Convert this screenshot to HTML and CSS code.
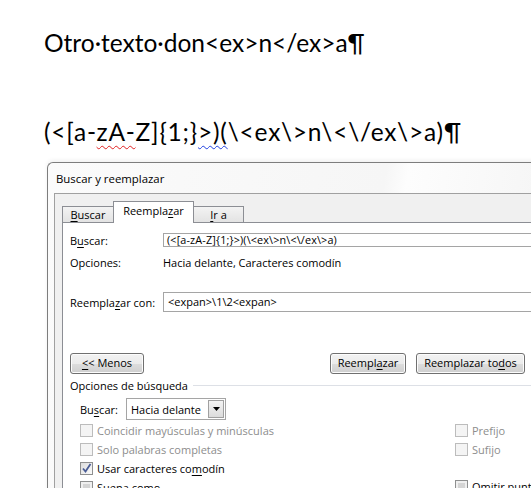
FILE: index.html
```html
<!DOCTYPE html>
<html lang="es">
<head>
<meta charset="utf-8">
<link rel="stylesheet" href="styles.css">
</head>
<body>
<div class="doc">
  <p class="line l1">Otro·texto·don&lt;ex&gt;n&lt;/ex&gt;a¶</p>
  <p class="line l2">(&lt;[a-<span class="sp">zA-</span>Z]{1;}<span class="gr">&gt;)(</span>\&lt;ex\&gt;n\&lt;\/ex\&gt;a)¶</p>
</div>
<div class="dialog">
  <div class="title">Buscar y reemplazar</div>
  <div class="client">
    <div class="tabs">
      <div class="tab t1"><u>B</u>uscar</div>
      <div class="tab sel">Reempla<u>z</u>ar</div>
      <div class="tab t3"><u>I</u>r a</div>
    </div>
    <div class="panel">
      <div class="row r-find">
        <span class="lbl">B<u>u</u>scar:</span>
        <div class="field small">(&lt;[a-zA-Z]{1;}&gt;)(\&lt;ex\&gt;n\&lt;\/ex\&gt;a)</div>
      </div>
      <div class="row r-opt">
        <span class="lbl">Opciones:</span>
        <span>Hacia delante, Caracteres comodín</span>
      </div>
      <div class="row r-rep">
        <span class="lbl">Reempla<u>z</u>ar con:</span>
        <div class="field big">&lt;expan&gt;\1\2&lt;expan&gt;</div>
      </div>
      <div class="btnrow">
        <div class="btn b-less"><u>&lt;</u>&lt; Menos</div>
        <div class="spacer"></div>
        <div class="btn b-rep">Reempl<u>a</u>zar</div>
        <div class="btn b-all">Reemplazar to<u>d</u>os</div>
      </div>
      <div class="group"><span>Opciones de búsqueda</span><i></i></div>
      <div class="dirrow">
        <span class="lbl2">Bu<u>s</u>car:</span>
        <div class="combo"><span>Hacia delante</span><b><svg width="7" height="4" viewBox="0 0 7 4"><path d="M0 0h7L3.5 4z" fill="#000"/></svg></b></div>
      </div>
      <div class="checks">
        <div class="col">
          <div class="chk dis"><i></i>Coincidir mayúsculas y minúsculas</div>
          <div class="chk dis"><i></i>Solo palabras completas</div>
          <div class="chk"><i class="on"><svg width="11" height="11" viewBox="0 0 11 11"><path d="M2 5.5l2.5 3L9.5 1" fill="none" stroke="#4a5d96" stroke-width="1.8"/></svg></i>Usar caracteres co<u>m</u>odín</div>
          <div class="chk"><i class="gray"></i>Suena como</div>
        </div>
        <div class="col right">
          <div class="chk dis"><i></i>Prefijo</div>
          <div class="chk dis"><i></i>Sufijo</div>
          <div class="chk gap"></div>
          <div class="chk"><i class="gray"></i>Omitir puntuación</div>
        </div>
      </div>
    </div>
  </div>
</div>
</body>
</html>
```
FILE: styles.css
```css
html, body { margin: 0; padding: 0; background: #fff; overflow: hidden; }
body { width: 531px; height: 488px; }
.doc { padding: 28px 0 0 44px; height: 128px; font-family: Lato, "Open Sans", sans-serif; font-size: 24.5px; color: #000; }
.line { margin: 0; line-height: 30px; white-space: nowrap; }
.l2 { margin-top: 59px; letter-spacing: 0.8px; }
.sp { text-decoration: underline wavy #e02020; text-decoration-thickness: 1px; text-underline-offset: 4px; }
.gr { text-decoration: underline wavy #2040e0; text-decoration-thickness: 1px; text-underline-offset: 4px; }

.dialog { margin: 6px 0 0 47px; width: 500px; height: 340px; border: 1px solid #7d7d7d; border-right: none; border-radius: 6px 0 0 0;
  background: linear-gradient(100deg, #fbfbfb 0%, #f6f6f6 60%, #fdfdfd 64%, #f2f2f2 100%);
  padding-left: 6px; box-shadow: 0 -2px 4px rgba(0,0,0,0.06);
  font-family: "Open Sans", "Noto Sans", sans-serif; font-size: 11px; color: #000; }
.title { height: 30px; line-height: 31px; padding-left: 2px; font-size: 11.4px; }
.client { border-left: 1px solid #a0a0a0; border-top: 1px solid #a0a0a0; background: #f0f0f0; height: 320px; padding: 7px 0 0 7px; }
.tabs { display: flex; align-items: flex-end; height: 21px; position: relative; z-index: 2; }
.tab { box-sizing: border-box; height: 16px; line-height: 15px; border: 1px solid #8c8e94; border-bottom: none; background: linear-gradient(#f3f3f3, #e3e3e3); text-align: center; margin-right: -1px; }
.t1 { width: 52px; }
.t3 { width: 51px; }
.tab.sel { height: 22px; line-height: 18px; background: #fff; width: 81px; margin-bottom: -1px; }
.panel { border: 1px solid #8c8e94; border-right: none; background: #fff; height: 300px; padding: 0 29px 0 7px; }
.row { display: flex; align-items: center; }
.lbl { width: 93px; flex: none; }
.r-find { margin-top: 10px; height: 14px; }
.field { background: #fff; border: 1px solid #a5a5a5; border-right: none; flex: 1; margin-right: -29px; box-sizing: border-box; padding-left: 3px; white-space: nowrap; overflow: hidden; }
.small { height: 14px; line-height: 12px; font-size: 10.8px; letter-spacing: 0.15px; }
.big { height: 20px; line-height: 18px; padding-left: 4px; }
.r-opt { margin-top: 9px; height: 13px; }
.r-rep { margin-top: 23px; height: 20px; }
.btnrow { display: flex; margin-top: 41px; height: 21px; }
.spacer { flex: 1; }
.btn { box-sizing: border-box; height: 21px; border: 1px solid #707070; border-radius: 3px; background: linear-gradient(#f2f2f2 0%, #ebebeb 50%, #dddddd 51%, #cfcfcf 100%); box-shadow: inset 0 0 0 1px #fcfcfc; text-align: center; line-height: 18px; white-space: nowrap; }
.b-less { width: 74px; }
.b-rep { width: 76px; margin-right: 10px; }
.b-all { width: 109px; }
.group { display: flex; align-items: center; margin-top: 4px; height: 14px; margin-right: -29px; }
.group i { flex: 1; border-top: 1px solid #dde0e6; margin-left: 5px; margin-top: 1px; }
.dirrow { display: flex; align-items: center; margin-top: 6px; margin-left: 10px; height: 22px; }
.lbl2 { width: 46px; }
.combo { box-sizing: border-box; width: 100px; height: 22px; border: 1px solid #a5a5a5; background: #fff; display: flex; align-items: center; padding-left: 4px; }
.combo span { flex: 1; }
.combo b { width: 16px; height: 18px; margin-right: 1px; border: 1px solid #a0a0a0; box-sizing: border-box; background: linear-gradient(#f4f4f4, #dcdcdc); display: flex; align-items: center; justify-content: center; }
.checks { display: flex; margin-left: 10px; margin-top: 1px; }
.col { display: flex; flex-direction: column; }
.col.right { margin-left: auto; margin-right: -29px; width: 99px; }
.chk { display: flex; align-items: center; height: 19px; white-space: nowrap; }
.chk i { box-sizing: border-box; width: 13px; height: 13px; border: 1px solid #8e8f8f; background: linear-gradient(135deg, #dcdcdc, #fbfbfb); margin-right: 4px; display: flex; align-items: center; justify-content: center; flex: none; }
.chk i.gray { background: #d4d4d4; box-shadow: inset 0 0 0 2px #efefef; }
.chk.dis { color: #8d8d8d; }
.chk.dis i { border-color: #bcbcbc; background: #f4f4f4; }
.chk.gap { height: 18px; }
u { text-decoration-thickness: 1px; text-underline-offset: 2px; }
```
